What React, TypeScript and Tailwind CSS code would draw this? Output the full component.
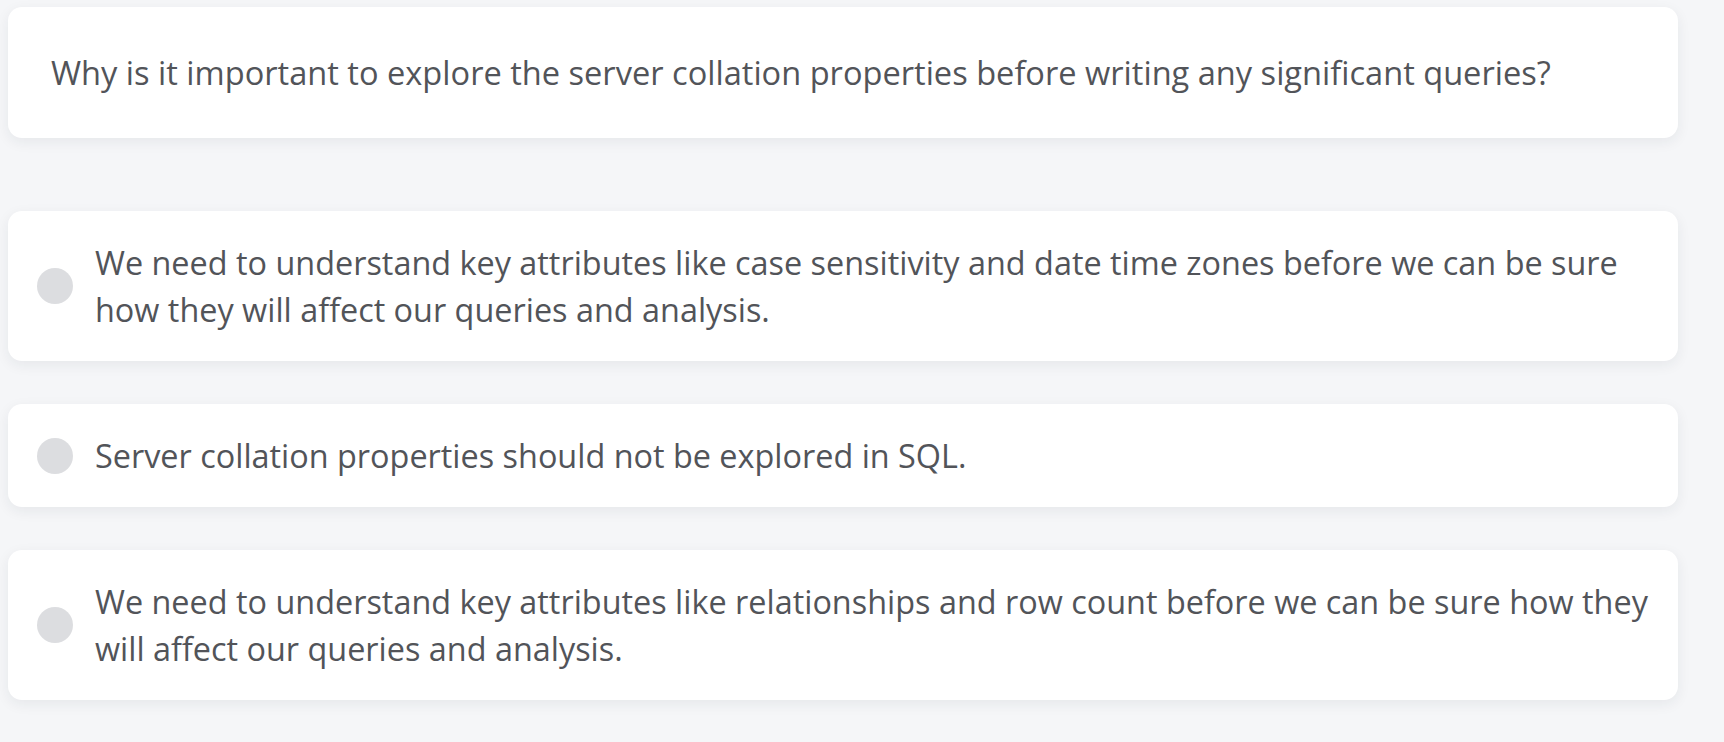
import React from "react";

const options = [
  "We need to understand key attributes like case sensitivity and date time zones before we can be sure how they will affect our queries and analysis.",
  "Server collation properties should not be explored in SQL.",
  "We need to understand key attributes like relationships and row count before we can be sure how they will affect our queries and analysis.",
];

export default function App() {
  return (
    <div
      className="min-h-[742px] w-full bg-[#f5f6f8] pl-2 pt-[7px] text-[#525459]"
      style={{ fontFamily: '"Open Sans", "Noto Sans", sans-serif' }}
    >
      <div className="w-[1670px]">
        <div className="rounded-[14px] bg-white px-[43px] py-[42px] text-[32.6px] leading-[47px] shadow-[0_4px_14px_rgba(30,40,60,0.07)]">
          Why is it important to explore the server collation properties before writing any significant queries?
        </div>
        <div className="mt-[73px] flex flex-col gap-[43px]">
          {options.map((o, i) => (
            <div
              key={i}
              className="flex items-center gap-[22px] rounded-[14px] bg-white py-[28px] pl-[29px] pr-[28px] shadow-[0_4px_14px_rgba(30,40,60,0.07)]"
            >
              <div className="h-[36px] w-[36px] shrink-0 rounded-full bg-[#dcdde0]" />
              <div className="text-[32.4px] leading-[47px]">{o}</div>
            </div>
          ))}
        </div>
      </div>
    </div>
  );
}
